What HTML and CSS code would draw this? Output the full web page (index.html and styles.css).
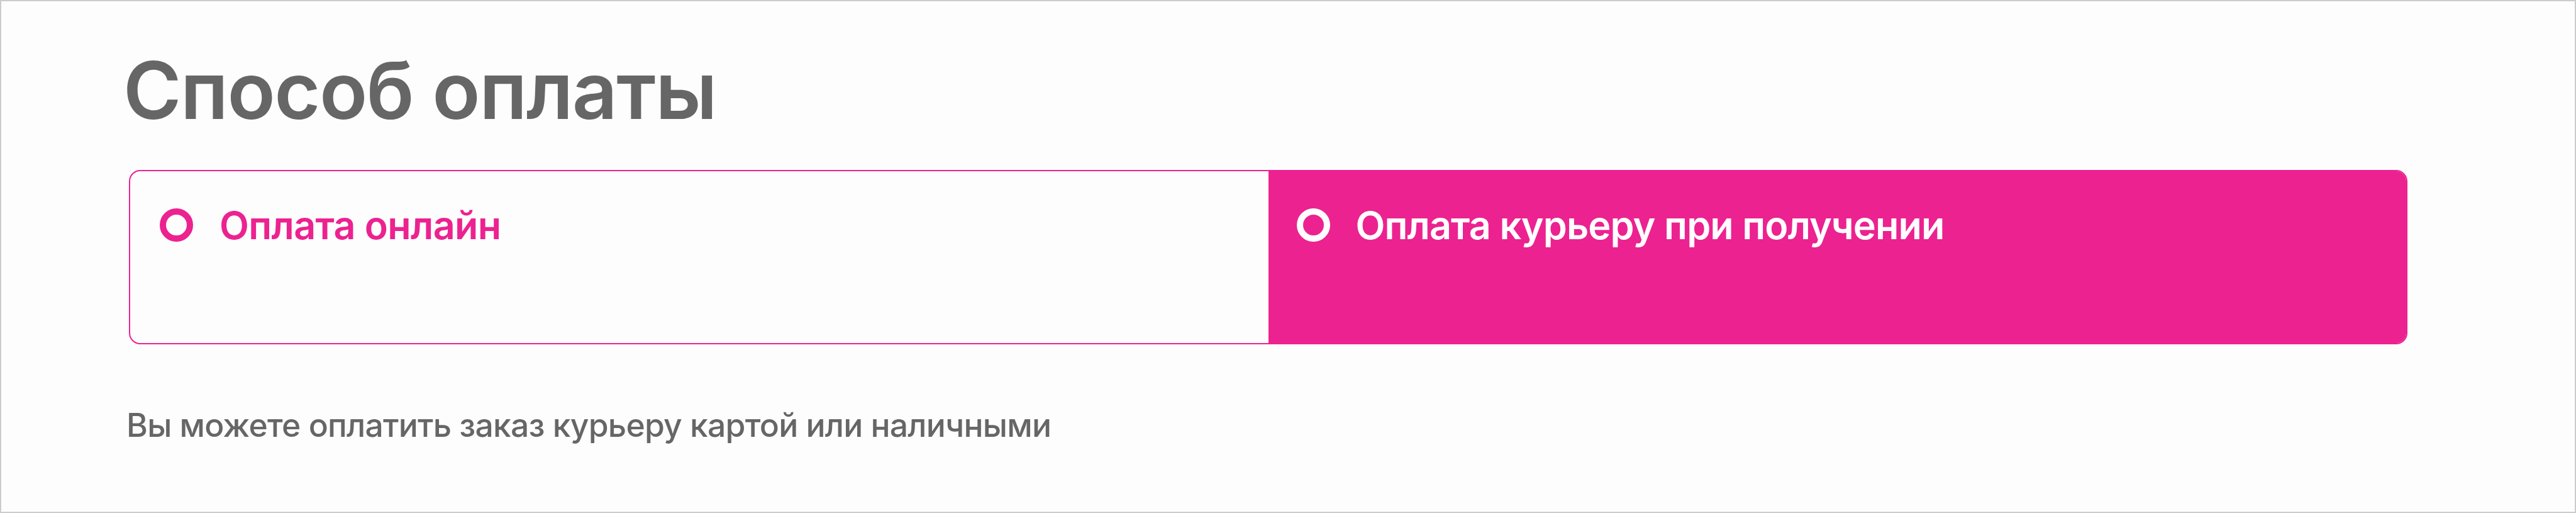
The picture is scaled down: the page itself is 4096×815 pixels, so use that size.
FILE: index.html
```html
<!DOCTYPE html>
<html lang="ru">
<head>
  <meta charset="UTF-8">
  <meta name="viewport" content="width=device-width, initial-scale=1.0">
  <title>Способ оплаты</title>
  <link rel="stylesheet" href="styles.css">
</head>
<body>
  <section class="payment">
    <h1 class="payment-title">Способ оплаты</h1>
    <div class="payment-options">
      <div class="option">
        <span class="option-radio"></span>
        <span class="option-label">Оплата онлайн</span>
      </div>
      <div class="option active">
        <span class="option-radio"></span>
        <span class="option-label option-label-long">Оплата курьеру при получении</span>
      </div>
    </div>
    <p class="payment-note">Вы можете оплатить заказ курьеру картой или наличными</p>
  </section>
</body>
</html>
```
FILE: styles.css
```css
* {
  box-sizing: border-box;
}
body {
  margin: 0;
  font-family: Inter, "Liberation Sans", sans-serif;
  color: #666;
  background-color: #fdfdfd;
}
.payment {
  height: 815px;
  padding: 66px 266px 0 203px;
  border: 2px solid #ccc;
  overflow: hidden;
}
.payment-title {
  margin: 0 0 52px -9px;
  font-size: 125.5px;
  font-weight: 600;
  line-height: 150px;
  letter-spacing: -1.5px;
  white-space: nowrap;
}
.payment-options {
  display: flex;
  height: 277px;
  border: 2px solid #ec2290;
  border-radius: 18px;
  overflow: hidden;
}
.option {
  width: 50%;
  display: flex;
  align-items: flex-start;
  gap: 42px;
  padding: 56px 47px;
  color: #ec2290;
}
.option.active {
  gap: 41px;
  padding-left: 45px;
  color: #fff;
  background-color: #ec2290;
}
.option-radio {
  width: 53px;
  height: 53px;
  margin-top: 3px;
  border: 10px solid currentColor;
  border-radius: 50%;
}
.option-label {
  font-size: 61px;
  font-weight: 600;
  line-height: 60px;
  letter-spacing: -0.62px;
  white-space: nowrap;
}
.option-label-long {
  letter-spacing: -0.87px;
}
.payment-note {
  margin: 98px 0 0 -4px;
  font-size: 51.6px;
  font-weight: 500;
  line-height: 60px;
  letter-spacing: -0.75px;
  white-space: nowrap;
}
```
